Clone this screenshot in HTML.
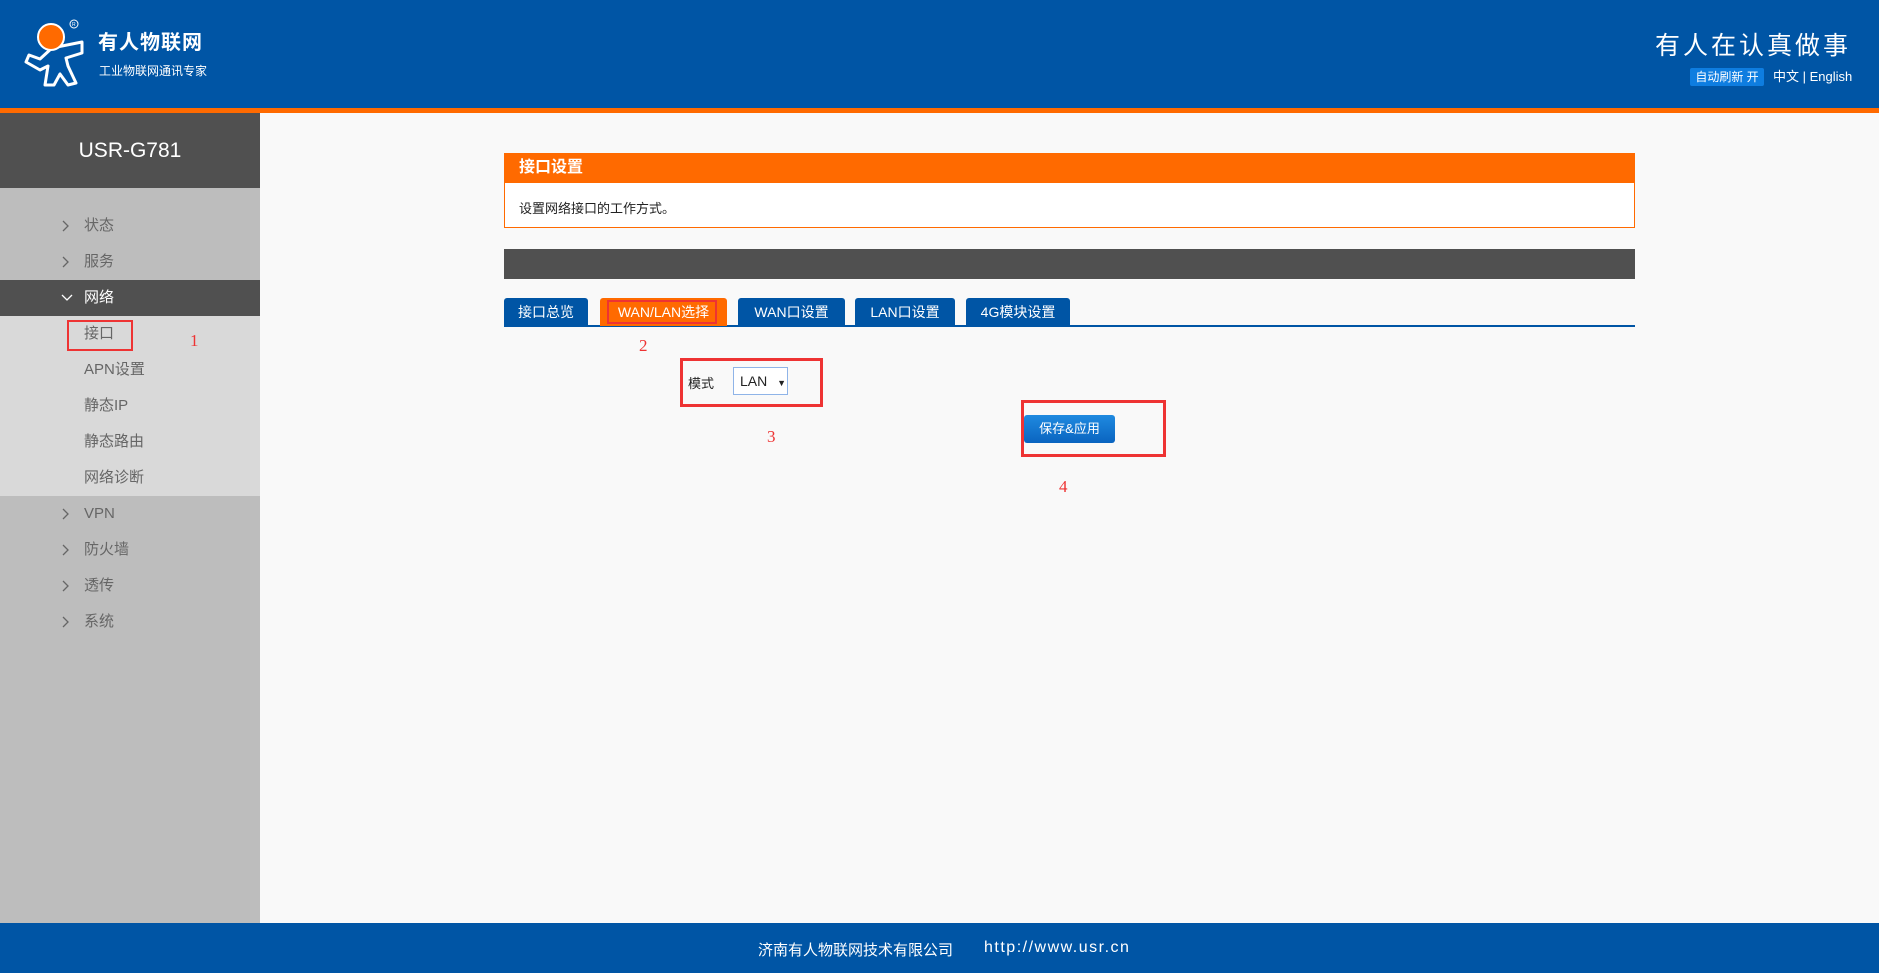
<!DOCTYPE html>
<html><head><meta charset="utf-8"><style>
*{margin:0;padding:0;box-sizing:border-box}
body{width:1879px;height:973px;background:#f9f9f9;font-family:"Liberation Sans","Noto Sans CJK SC",sans-serif;position:relative;overflow:hidden}
.abs{position:absolute}
#hdr{left:0;top:0;width:1879px;height:108px;background:#0055a5}
#obar{left:0;top:108px;width:1879px;height:5px;background:#ff6a00}
#side{left:0;top:113px;width:260px;height:810px;background:#bdbdbd}
#stop{left:0;top:113px;width:260px;height:75px;background:#505050;color:#fff;font-size:21px;text-align:center;line-height:75px}
.mi{position:absolute;left:0;width:260px;height:36px;line-height:36px;font-size:15px;color:#666;padding-left:84px}
.mi svg{position:absolute;left:60px;top:11px}
#foot{left:0;top:923px;width:1879px;height:50px;background:#0055a5;color:#fff;font-size:15px}
.tab{position:absolute;top:298px;height:28px;background:#0055a5;color:#fff;font-size:14px;line-height:28px;text-align:center;border-radius:3px 3px 0 0}
.red{position:absolute;border:3px solid #ee3333}
.num{position:absolute;color:#ee3333;font-family:"Liberation Serif",serif;font-size:17px}
</style></head><body>
<div id="hdr" class="abs"></div>
<svg class="abs" style="left:18px;top:18px" width="76" height="72" viewBox="0 0 76 72">
<path d="M34 30 L64 24 L64 35 L48 40 L50 48 L58 65 L50 67 L42 56 L36 67 L27 67 L30 48 L22 52 L8 44 L11 37 L22 41 Z" fill="none" stroke="#fff" stroke-width="3" stroke-linejoin="round"/>
<circle cx="33" cy="19" r="13" fill="#ff6a00" stroke="#fff" stroke-width="2"/>
<circle cx="56" cy="6" r="4" fill="none" stroke="#fff" stroke-width="1"/>
<text x="54" y="8" font-size="5" fill="#fff" font-family="Liberation Sans">R</text>
</svg>
<div class="abs" style="left:98px;top:26px;color:#fff;font-size:20px;font-weight:bold;letter-spacing:1px">有人物联网</div>
<div class="abs" style="left:99px;top:62px;color:#fff;font-size:12px">工业物联网通讯专家</div>
<div class="abs" style="right:28px;top:26px;color:#fff;font-size:25px;letter-spacing:3px">有人在认真做事</div>
<div class="abs" style="left:1690px;top:68px;width:74px;height:18px;background:#0e7de0;border-radius:2px;color:#fff;font-size:12px;line-height:18px;text-align:center">自动刷新 开</div>
<div class="abs" style="left:1773px;top:68px;color:#fff;font-size:13px;line-height:18px">中文 | English</div>
<div id="obar" class="abs"></div>
<div id="side" class="abs"></div>
<div id="stop" class="abs">USR-G781</div>
<div class="mi" style="top:208px"><svg width="10" height="14"><polyline points="3,2 8,7 3,12" fill="none" stroke="#666" stroke-width="1.3"/></svg>状态</div>
<div class="mi" style="top:244px"><svg width="10" height="14"><polyline points="3,2 8,7 3,12" fill="none" stroke="#666" stroke-width="1.3"/></svg>服务</div>
<div class="mi" style="top:280px;background:#505050;color:#fff"><svg width="14" height="14"><polyline points="2,4 7,9 12,4" fill="none" stroke="#fff" stroke-width="1.3"/></svg>网络</div>
<div class="abs" style="left:0;top:316px;width:260px;height:180px;background:#d9d9d9"></div>
<div class="mi" style="top:316px">接口</div>
<div class="mi" style="top:352px">APN设置</div>
<div class="mi" style="top:388px">静态IP</div>
<div class="mi" style="top:424px">静态路由</div>
<div class="mi" style="top:460px">网络诊断</div>
<div class="mi" style="top:496px"><svg width="10" height="14"><polyline points="3,2 8,7 3,12" fill="none" stroke="#666" stroke-width="1.3"/></svg>VPN</div>
<div class="mi" style="top:532px"><svg width="10" height="14"><polyline points="3,2 8,7 3,12" fill="none" stroke="#666" stroke-width="1.3"/></svg>防火墙</div>
<div class="mi" style="top:568px"><svg width="10" height="14"><polyline points="3,2 8,7 3,12" fill="none" stroke="#666" stroke-width="1.3"/></svg>透传</div>
<div class="mi" style="top:604px"><svg width="10" height="14"><polyline points="3,2 8,7 3,12" fill="none" stroke="#666" stroke-width="1.3"/></svg>系统</div>
<div class="red" style="left:67px;top:320px;width:66px;height:31px;border-width:2px"></div>
<div class="num" style="left:190px;top:331px">1</div>

<div class="abs" style="left:504px;top:153px;width:1131px;height:75px;border:1px solid #ff6a00;background:#fff"></div>
<div class="abs" style="left:504px;top:153px;width:1131px;height:30px;background:#ff6a00;color:#fff;font-weight:bold;font-size:16px;line-height:30px;padding-left:15px">接口设置</div>
<div class="abs" style="left:519px;top:198px;font-size:13px;color:#222">设置网络接口的工作方式。</div>
<div class="abs" style="left:504px;top:249px;width:1131px;height:30px;background:#505050"></div>
<div class="abs" style="left:504px;top:325px;width:1131px;height:2px;background:#0055a5"></div>
<div class="tab" style="left:504px;width:84px">接口总览</div>
<div class="tab" style="left:600px;width:127px;background:#ff6a00">WAN/LAN选择</div>
<div class="red" style="left:607px;top:300px;height:24px;border-width:2px;width:110px"></div>
<div class="tab" style="left:738px;width:107px">WAN口设置</div>
<div class="tab" style="left:855px;width:100px">LAN口设置</div>
<div class="tab" style="left:966px;width:104px">4G模块设置</div>
<div class="num" style="left:639px;top:336px">2</div>
<div class="red" style="left:680px;top:358px;width:143px;height:49px"></div>
<div class="abs" style="left:688px;top:373px;font-size:13px;color:#222">模式</div>
<div class="abs" style="left:733px;top:367px;width:55px;height:28px;border:1px solid #8fb4e8;background:#fff;font-size:14px;line-height:26px;padding-left:6px;color:#222">LAN <span style="font-size:9px;margin-left:6px">&#9660;</span></div>
<div class="num" style="left:767px;top:427px">3</div>
<div class="red" style="left:1021px;top:400px;width:145px;height:57px"></div>
<div class="abs" style="left:1024px;top:415px;width:91px;height:28px;border-radius:3px;background:linear-gradient(#1f8ae0,#0a64c0);color:#fff;font-size:13px;line-height:28px;text-align:center">保存&amp;应用</div>
<div class="num" style="left:1059px;top:477px">4</div>

<div id="foot" class="abs"><span class="abs" style="left:758px;top:16px">济南有人物联网技术有限公司</span><span class="abs" style="left:984px;top:16px;letter-spacing:1.5px;font-size:16px">http://www.usr.cn</span></div>
</body></html>
